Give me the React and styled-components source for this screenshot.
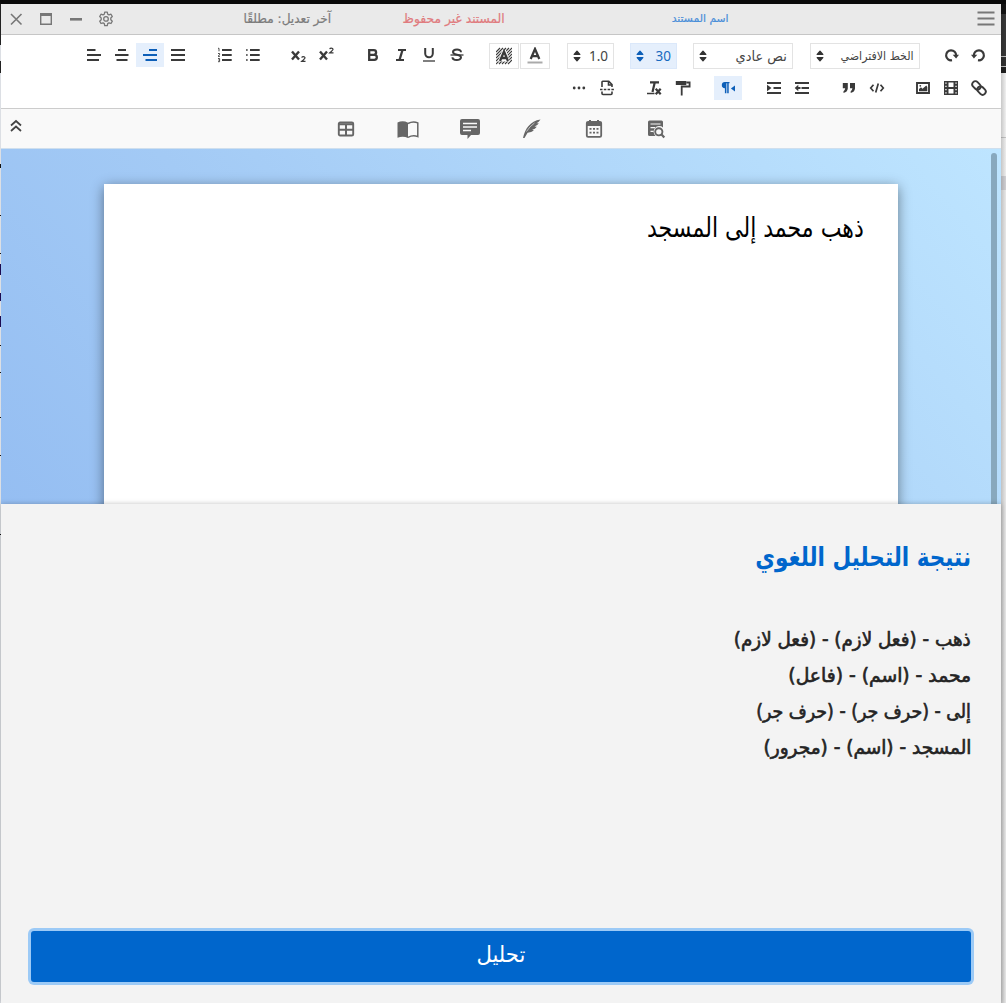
import React from 'react';
import styled, { createGlobalStyle, css } from 'styled-components';

const Global = createGlobalStyle`
  * { box-sizing: border-box; }
  body { margin: 0; background: #e9e9e9; }
`;

const UI = css`font-family: "DejaVu Sans Condensed", "DejaVu Sans", sans-serif; font-stretch: condensed;`;

const Desktop = styled.div`
  width: 1006px; height: 1003px; overflow: hidden;
  border-top: 4px solid #0a0a0a;
  display: grid; grid-template-columns: 1px 1000px 5px;
  ${UI}
`;

const tick = (a, b, c, base) => `${base} ${a}px, ${c} ${a}px, ${c} ${b}px, ${base} ${b}px`;
const leftMarks = [
  [0, 41, '#222'], [57, 69, '#222'], [160, 164, '#111'], [211, 212, '#111'], [249, 250, '#111'],
  [260, 271, '#1b0a50'], [289, 297, '#1b0a50'], [312, 323, '#1b0a50'], [341, 342, '#111'],
  [368, 369, '#111'], [413, 414, '#111'], [451, 452, '#111'], [530, 531, '#111'],
].map(([a, b, c]) => tick(a, b, c, '#dcdfe4')).join(', ');

const LeftEdge = styled.div`background: linear-gradient(to bottom, ${leftMarks});`;
const RightEdge = styled.div`
  background:
    linear-gradient(to right, rgba(0,0,0,.2), rgba(0,0,0,.04)),
    linear-gradient(to bottom, #151515 10px, #3a3a3a 10px, #3a3a3a 52px, #ccc 52px, #ccc 53px,
      #333 53px, #333 62px, #ccc 62px, #ccc 63px, #222 63px, #222 69px, #fafafa 69px,
      #fafafa 133px, #ccc 133px, #ccc 134px, #f7f7f7 134px, #f7f7f7 172px, #d8d8dc 172px,
      #d8d8dc 186px, #f1f1f1 186px);
`;

const Window = styled.main`
  display: flex; flex-direction: column; min-width: 0; height: 999px; background: #f3f3f3;
`;

const TitleBar = styled.header`
  height: 31px; flex: none; display: flex; align-items: center;
  background: #eaeaea; border-bottom: 1px solid #c6c6c6;
`;
const WindowButton = styled.button`
  width: 30px; height: 30px; padding: 0; border: 0; background: none; color: #777;
  display: flex; align-items: center; justify-content: center;
`;
const Controls = styled.div`display: flex; width: 120px; margin-right: 83px;`;
const Meta = styled.div`
  width: ${p => p.$w}px; display: flex; justify-content: center;
  font-size: ${p => p.$size}px; color: ${p => p.$color}; white-space: nowrap; line-height: 28px;
  -webkit-text-stroke: .2px currentColor;
`;
const Fit = styled.span`
  display: inline-block; white-space: nowrap;
  transform: scaleX(${p => p.$x || 1}); transform-origin: ${p => p.$from || 'center'};
`;
const MenuButton = styled(WindowButton)`margin-left: auto;`;

const Toolbar = styled.section`
  height: 74px; flex: none; background: #fff; border-bottom: 1px solid #ccc;
  padding-top: 8px; color: #3a3a3a;
`;
const ToolRow = styled.div`
  display: flex; align-items: flex-start; height: 33px; padding-left: ${p => p.$start}px;
`;
const Group = styled.div`display: flex; margin-left: ${p => p.$gap || 0}px; gap: ${p => p.$inner || 0}px;`;
const Tool = styled.button`
  width: 28px; height: 24px; padding: 0; border: 0; display: flex; align-items: center; justify-content: center;
  color: ${p => (p.$active ? '#0d5fb8' : 'inherit')};
  background: ${p => (p.$active ? '#e5effc' : 'transparent')};
`;
const BoxTool = styled(Tool)`width: 30px; height: 26px; border: 1px solid #e3e3e3;`;
const Select = styled.button`
  width: ${p => p.$w}px; height: 26px; padding: 0 5px; display: flex; align-items: center; justify-content: space-between;
  border: 1px solid ${p => (p.$active ? '#dbe8fa' : '#e3e3e3')};
  background: ${p => (p.$active ? '#e5effc' : '#fff')};
  color: ${p => (p.$active ? '#1769bf' : '#444')};
  font-family: ${p => (p.$latin ? '"Noto Sans", sans-serif' : '"DejaVu Sans Condensed", "DejaVu Sans", sans-serif')};
  font-size: ${p => p.$size || 13.5}px; line-height: 24px;
  > svg { color: ${p => (p.$active ? '#0d5fb8' : '#333')}; }
  > span { margin-top: -1px; }
`;

const Ribbon = styled.nav`
  height: 40px; flex: none; display: flex; align-items: center; background: #f9f9f9; border-bottom: 1px solid #cfdfee;
  color: #666;
`;
const Collapse = styled(WindowButton)`color: #444; margin: -6px 284px 0 0;`;
const RibbonButton = styled.button`
  width: 62px; height: 40px; padding: 1px 0 0; border: 0; background: none; color: #666;
  display: flex; align-items: center; justify-content: center;
`;

const Canvas = styled.section`
  position: relative; height: 355px; flex: none; overflow: hidden; padding: 35px 103px 0;
  background: linear-gradient(50deg, #95bef2 0%, #a3caf5 35%, #bee5ff 100%);
`;
const Paper = styled.article`
  height: 700px; background: #fff; padding: 22px 34px; color: #000;
  box-shadow: 0 3px 12px rgba(0,0,0,.45);
  font-size: 27px; line-height: 44px;
`;
const Scrollbar = styled.div`
  position: absolute; right: 4px; top: 4px; width: 6px; height: 400px; border-radius: 3px; background: #88a8bd;
`;

const Panel = styled.section`
  flex: 1; display: flex; flex-direction: column; padding: 33px 30px 21px; z-index: 1;
  background: #f3f3f3; box-shadow: 0 0 5px rgba(0,0,0,.25);
`;
const Heading = styled.h2`
  margin: 0 0 45px; font-size: 26px; line-height: 40px; font-weight: 700; color: #06c;
`;
const Results = styled.ul`list-style: none; margin: 0; padding: 0;`;
const Result = styled.li`
  height: 36px; line-height: 36px; font-size: 19.5px; color: #242424;
  -webkit-text-stroke: .6px currentColor;
`;
const Analyze = styled.button`
  margin-top: auto; height: 51px; border: 0; border-radius: 3px; padding: 0 0 4px; background: #06c; color: #fff;
  box-shadow: 0 0 0 3px #9ccaf6; font-size: 22px; ${UI}
`;

const Icon = ({ w = 16, h = 16, vb, children }) => (
  <svg width={w} height={h} viewBox={vb || `0 0 ${w} ${h}`} fill="currentColor" stroke="none">{children}</svg>
);
const Line = ({ d, sw = 2, ...r }) => <path d={d} fill="none" stroke="currentColor" strokeWidth={sw} {...r} />;

const CloseIcon = () => <Icon><Line sw={1.6} d="M3 3l10.5 10.5M13.5 3L3 13.5" /></Icon>;
const MaxIcon = () => <Icon><Line sw={1.4} d="M2.7 3h10.6v10.3H2.7z" /><path d="M2 2h12v3H2z" /></Icon>;
const MinIcon = () => <Icon><path d="M2 7h12v2.6H2z" /></Icon>;
const GearIcon = () => (
  <Icon>
    <Line sw={1.3} strokeLinejoin="round" d="M6.7 1.2h2.6l.4 2 1.3.7 2-.7 1.3 2.3-1.5 1.4v1.9l1.5 1.4-1.3 2.3-2-.7-1.3.8-.4 2H6.7l-.4-2-1.3-.8-2 .7-1.3-2.3 1.5-1.4V6.9L1.700 5.500 3 3.200l2 .7 1.300-.7z" />
    <circle cx="8" cy="7.900" r="2.300" fill="none" stroke="currentColor" strokeWidth="1.300" />
  </Icon>
);
const BurgerIcon = () => <Icon w={18}><Line d="M.5 1.500h17M.5 7.500h17M.5 13.500h17" sw={2} /></Icon>;
const AlignIcon = ({ k }) => {
  const d = {
    left: 'M1 3h8.500M1 8h14M1 13h12',
    center: 'M4 3h8M1 8h13.500M2.500 13h11',
    right: 'M7 3h8M1 8h14M3.500 13h11.500',
    full: 'M1 3h14M1 8h14M1 13h14',
  }[k];
  return <Icon><Line d={d} /></Icon>;
};
const NumListIcon = () => (
  <Icon>
    <Line d="M5 3h9.700M5 8h9.700M5 13h9.700" />
    <Line sw={0.9} d="M1 1.300h1v3M1 6.500h1.600v1.300L1 9.300h2M1 11.500h1.600v3.200H1M1.300 13h1.300" />
  </Icon>
);
const BulletIcon = () => (
  <Icon>
    <Line d="M5 3h9.700M5 8h9.700M5 13h9.700" />
    <path d="M1 2.200h1.700v1.600H1zM1 7.200h1.700v1.600H1zM1 12.200h1.700v1.600H1z" />
  </Icon>
);
const ScriptIcon = ({ sup }) => (
  <Icon>
    <Line sw={2.400} d="M2 4.500l7 8M9 4.500l-7 8" />
    <g transform={sup ? 'translate(.5 -8.500)' : 'translate(.5 0)'}>
      <Line sw={1.200} d="M11.200 10.600q.3-1 1.700-1t1.600 1.100q0 .8-3.200 3.600h3.700" />
    </g>
  </Icon>
);
const BoldIcon = () => <Icon><Line sw={2.300} d="M4.200 3.200h4.600a2.200 2.200 0 0 1 0 4.600H4.200zM4.200 7.800h5.100a2.500 2.500 0 0 1 0 5.100H4.200z" /></Icon>;
const ItalicIcon = () => <Icon><Line d="M5 3h8M3 13h8" /><Line sw={2.300} d="M9.500 3L6.500 13" /></Icon>;
const UnderlineIcon = () => <Icon><Line sw={2} d="M4.200 1v5.500a3.800 3.800 0 0 0 7.600 0V1" /><Line sw={1.300} d="M2 14h12" /></Icon>;
const StrikeIcon = () => <Icon><Line sw={2} d="M12 5.200C12 1.500 4 1.800 4 5q0 2 4 2.700 4 .7 4 2.800c0 3.400-8.500 3.500-8.500-.3" /><Line sw={1.300} d="M1.500 8h13" /></Icon>;
const FontColorIcon = () => <Icon h={18}><Line sw={2.300} d="M3.700 12L8 2l4.300 10M5.200 9.200h5.600" /><path fill="#aaa" d="M.5 14.500h15v2H.5z" /></Icon>;
const HiliteIcon = () => (
  <Icon h={18}>
    <Line sw={1.100} d="M0 5l4-4M0 8l7-7M0 11l10-10M0 14l13-13M0 17L16 1M3 17L16 4M6 17L16 7M9 17l7-7M12 17l4-4" />
    <path fill="#fff" d="M6.300 3h3.700l3.800 11.500h-12z" />
    <Line sw={2.300} d="M4 14L8 4.500 12 14M5.500 11h5" />
  </Icon>
);
const SpinIcon = () => <Icon w={8} h={12}><path d="M1.200 4.400L4 1.200l2.800 3.200zM1.200 7.600L4 10.800l2.800-3.200z" stroke="currentColor" strokeWidth="1.300" strokeLinejoin="round" /></Icon>;
const RedoIcon = () => <Icon><Line sw={2.200} d="M9 13.200A5 5 0 1 1 13.100 8.500" /><path d="M9.700 7.700h6.300l-2.900 3.800z" /></Icon>;
const UndoIcon = () => <Icon><Line sw={2.200} d="M7 13.200A5 5 0 1 0 2.900 8.500" /><path d="M6.300 7.700H0l2.900 3.800z" /></Icon>;
const MoreIcon = () => <Icon><circle cx="3.200" cy="8" r="1.400" /><circle cx="8" cy="8" r="1.400" /><circle cx="12.800" cy="8" r="1.400" /></Icon>;
const PageBreakIcon = () => (
  <Icon>
    <Line sw={1.600} d="M3 7V2q0-.8.800-.8h6L13 4.500V7M9.500 1.500V5H13M3 11.500v2q0 1 1 1h8q1 0 1-1v-2" />
    <Line sw={1.600} d="M1 9.500h14" strokeDasharray="2.500 1.300" />
  </Icon>
);
const ClearIcon = () => <Icon><Line sw={2.200} d="M4 2.300h9M8.800 2.300L6.500 12" /><Line sw={1.500} d="M1 13.500h7.500" /><Line sw={2.200} d="M9.700 8.700l5 5.500M14.700 8.700l-5 5.500" /></Icon>;
const PaintIcon = () => <Icon><path d="M.8 1h10.500v4H.8z" /><Line sw={1.800} d="M11.300 2.500h3.300v4H6.700V15.500" /></Icon>;
const RtlIcon = () => <Icon><path d="M5.300 2H9.500v1.300h-.8v9.900H7.200V3.300h-.8v9.900H4.900V8.300A3.100 3.100 0 0 1 5 2z" /><path d="M15 5.400v6L10.900 8.400z" /></Icon>;
const IndentIcon = ({ out }) => (
  <Icon>
    <Line d="M1 3h14M1 13h14" /><Line d="M7.500 8h7.500" />
    <path d={out ? 'M4.300 4.800v6.500L.7 8zM3 7h3.500v2H3z' : 'M1 4.800v6.500L5.500 8z'} />
  </Icon>
);
const QuoteIcon = () => <Icon><path d="M1.800 3h5v5.500Q6.500 12 2.500 13v-1.800Q4 10.500 4.200 8.300H1.800zM9 3h5v5.500q-.3 3.500-4.300 4.500v-1.800q1.500-.7 1.700-2.900H9z" /></Icon>;
const CodeIcon = () => <Icon><Line sw={1.700} d="M4.500 4.700L1.700 8l2.800 3.300M11.500 4.700L14.300 8l-2.800 3.300M9.300 3.500l-2.600 9" /></Icon>;
const ImageIcon = () => <Icon><Line sw={1.900} d="M2 3h12v10H2z" /><path d="M4 11.300V9l2-1.800 1.500 1.500L11.300 5.500 12.300 7v4.300z" /><circle cx="5.300" cy="5.800" r=".9" /></Icon>;
const FilmIcon = () => (
  <Icon>
    <path d="M1 1h14v14H1z" />
    <path fill="#fff" d="M5.500 2.500h5v4.500h-5zM5.500 9h5v4.500h-5zM2.300 2.500h1.300v1.300H2.300zM2.300 5.700h1.300V7H2.300zM2.300 9h1.300v1.300H2.300zM2.300 12.200h1.300v1.300H2.300zM12.400 2.500h1.300v1.300h-1.300zM12.400 5.700h1.300V7h-1.300zM12.400 9h1.300v1.300h-1.300zM12.400 12.200h1.300v1.300h-1.300z" />
  </Icon>
);
const LinkIcon = () => (
  <Icon>
    <g transform="rotate(45 8 8)" fill="none" stroke="currentColor" strokeWidth="1.900">
      <rect x="-.2" y="4.900" width="9.200" height="6.200" rx="3.100" />
      <rect x="7" y="4.900" width="9.200" height="6.200" rx="3.100" />
    </g>
  </Icon>
);
const ChevronsIcon = () => <Icon><Line sw={1.700} d="M3 7.500l5-4.500 5 4.500M3 13l5-4.500 5 4.500" /></Icon>;

const TableIcon = () => <Icon w={18} h={16}><rect x="1.800" y="1.500" width="14.400" height="13" rx="1.300" fill="none" stroke="currentColor" strokeWidth="1.900" /><Line d="M1.500 3.300h15M1.500 8.800h15M9 3v11" sw={2} /></Icon>;
const BookIcon = () => (
  <Icon w={22} h={20}>
    <path d="M.5 3.500Q6 1 11 3.800V19Q6 16.500.5 18.800z" />
    <Line sw={1.500} d="M11 4.500q5-2.800 9.800-.6v13.700Q16 15.800 11 18.300" />
  </Icon>
);
const CommentIcon = () => <Icon w={20} h={20}><path d="M2 0h16q2 0 2 2v12q0 2-2 2h-7l-3.500 4v-4H2q-2 0-2-2V2Q0 0 2 0z" /><path d="M3 4.500h14M3 8h14M3 11.500h8" stroke="#f9f9f9" strokeWidth="1.600" /></Icon>;
const FeatherIcon = () => (
  <Icon w={20} h={20}>
    <path d="M1 19C3 10 8 2 18.500.5q-1.500 2.500-4 3.700l2.300.1q-1.600 2.500-4.300 3.300l2.300.2q-1.600 2.400-4.600 3l1.700.7q-2.500 2-6.300 2.200L2.500 19z" />
    <path d="M4.500 12.500Q7.500 7.500 12.500 4" fill="none" stroke="#f9f9f9" strokeWidth=".6" />
  </Icon>
);
const CalendarIcon = () => (
  <Icon w={18} h={20}>
    <rect x="1.800" y="3" width="14.400" height="14.800" rx="1.300" fill="none" stroke="currentColor" strokeWidth="1.800" />
    <path d="M1.500 3h15v4h-15zM4 1h2v3H4zM12 1h2v3h-2z" />
    <path d="M4.500 9h2v1.800h-2zM8 9h2v1.800H8zM11.500 9h2v1.800h-2zM4.500 12.700h2v1.800h-2zM8 12.700h2v1.800H8zM11.500 12.700h2v1.800h-2z" />
  </Icon>
);
const SearchDocIcon = () => (
  <Icon w={20} h={20}>
    <path d="M3.500 1.500h12q1.500 0 1.500 1.500v5.500a5.500 5.500 0 0 0-7.500 8.500h-6Q2 17 2 15.500V3q0-1.500 1.500-1.500z" />
    <path d="M4.500 5h10M4.500 8.700h4.500M4.500 12.400h3" stroke="#f9f9f9" strokeWidth="1.200" />
    <circle cx="12.800" cy="12.800" r="3.600" fill="#f9f9f9" stroke="currentColor" strokeWidth="1.900" />
    <Line sw={2.200} d="M15.300 15.300l3 3.300" />
  </Icon>
);

const results = [
  ['ذهب - (فعل لازم) - (فعل لازم)', 1.045],
  ['محمد - (اسم) - (فاعل)', 1.068],
  ['إلى - (حرف جر) - (حرف جر)', 0.99],
  ['المسجد - (اسم) - (مجرور)', 1.053],
];
const ribbon = [TableIcon, BookIcon, CommentIcon, FeatherIcon, CalendarIcon, SearchDocIcon];

export default function App() {
  return (
    <>
      <Global />
      <Desktop>
        <LeftEdge />
        <Window>
          <TitleBar>
            <Controls>
              <WindowButton><CloseIcon /></WindowButton>
              <WindowButton><MaxIcon /></WindowButton>
              <WindowButton><MinIcon /></WindowButton>
              <WindowButton><GearIcon /></WindowButton>
            </Controls>
            <Meta dir="rtl" $w={166} $size={13} $color="#7c7c7c"><Fit $x={1.035}>آخر تعديل: مطلقًا</Fit></Meta>
            <Meta dir="rtl" $w={167} $size={13} $color="#e07b7e"><Fit $x={1.05}>المستند غير محفوظ</Fit></Meta>
            <Meta dir="rtl" $w={326} $size={11} $color="#4a8fd9"><Fit $x={1.09}>اسم المستند</Fit></Meta>
            <MenuButton><BurgerIcon /></MenuButton>
          </TitleBar>
          <Toolbar>
            <ToolRow $start={79}>
              <Group>
                <Tool><AlignIcon k="left" /></Tool>
                <Tool><AlignIcon k="center" /></Tool>
                <Tool $active><AlignIcon k="right" /></Tool>
                <Tool><AlignIcon k="full" /></Tool>
              </Group>
              <Group $gap={19}><Tool><NumListIcon /></Tool><Tool><BulletIcon /></Tool></Group>
              <Group $gap={17}><Tool><ScriptIcon /></Tool><Tool><ScriptIcon sup /></Tool></Group>
              <Group $gap={19}>
                <Tool><BoldIcon /></Tool><Tool><ItalicIcon /></Tool><Tool><UnderlineIcon /></Tool><Tool><StrikeIcon /></Tool>
              </Group>
              <Group $gap={18} $inner={1}><BoxTool><HiliteIcon /></BoxTool><BoxTool><FontColorIcon /></BoxTool></Group>
              <Group $gap={17}><Select $w={47} $latin><SpinIcon /><span>1.0</span></Select></Group>
              <Group $gap={16}><Select $w={47} $latin $active><SpinIcon /><span>30</span></Select></Group>
              <Group $gap={16}><Select $w={100} $size={14}><SpinIcon /><Fit dir="rtl" $from="right" $x={1.03}>نص عادي</Fit></Select></Group>
              <Group $gap={17}><Select $w={110} $size={12}><SpinIcon /><Fit dir="rtl" $from="right" $x={1.02}>الخط الافتراضي</Fit></Select></Group>
              <Group $gap={17} $inner={-1}><Tool><RedoIcon /></Tool><Tool><UndoIcon /></Tool></Group>
            </ToolRow>
            <ToolRow $start={564}>
              <Group><Tool><MoreIcon /></Tool><Tool><PageBreakIcon /></Tool></Group>
              <Group $gap={19} $inner={1}><Tool><ClearIcon /></Tool><Tool><PaintIcon /></Tool></Group>
              <Group $gap={17}><Tool $active><RtlIcon /></Tool></Group>
              <Group $gap={18}><Tool><IndentIcon /></Tool><Tool><IndentIcon out /></Tool></Group>
              <Group $gap={19}><Tool><QuoteIcon /></Tool><Tool><CodeIcon /></Tool></Group>
              <Group $gap={18}><Tool><ImageIcon /></Tool><Tool><FilmIcon /></Tool><Tool><LinkIcon /></Tool></Group>
            </ToolRow>
          </Toolbar>
          <Ribbon>
            <Collapse><ChevronsIcon /></Collapse>
            {ribbon.map((I, i) => <RibbonButton key={i}><I /></RibbonButton>)}
          </Ribbon>
          <Canvas>
            <Paper dir="rtl"><Fit $from="right" $x={0.908}>ذهب محمد إلى المسجد</Fit></Paper>
            <Scrollbar />
          </Canvas>
          <Panel dir="rtl">
            <Heading><Fit $from="right" $x={0.922}>نتيجة التحليل اللغوي</Fit></Heading>
            <Results>
              {results.map(([t, x]) => <Result key={t}><Fit $x={x} $from="right">{t}</Fit></Result>)}
            </Results>
            <Analyze><Fit $x={1.07}>تحليل</Fit></Analyze>
          </Panel>
        </Window>
        <RightEdge />
      </Desktop>
    </>
  );
}
